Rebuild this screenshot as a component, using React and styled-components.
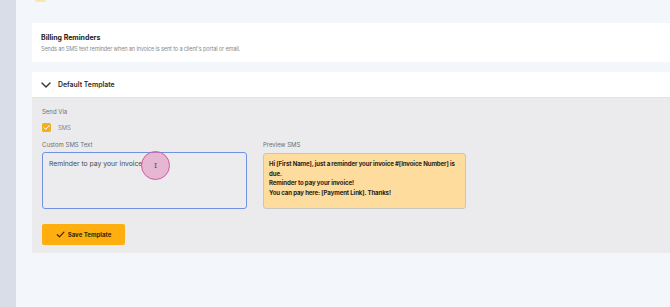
import React from "react";
import styled, { createGlobalStyle } from "styled-components";

const GlobalStyle = createGlobalStyle`
  html, body {
    margin: 0;
    padding: 0;
    background: #f3f6fa;
  }
  body {
    font-family: Inter, "Liberation Sans", sans-serif;
    color: #222;
  }
`;

function Chevron() {
  return (
    <svg width="10" height="6" viewBox="0 0 10 6" fill="none">
      <path d="M1 1l4 4 4-4" stroke="#333" strokeWidth="1.4" strokeLinecap="round" strokeLinejoin="round" />
    </svg>
  );
}

function Check({ color = "#fff", size = 7 }) {
  return (
    <svg width={size} height={size} viewBox="0 0 10 10" fill="none">
      <path d="M1.5 5.2l2.4 2.4L8.8 2.4" stroke={color} strokeWidth="1.4" strokeLinecap="round" strokeLinejoin="round" />
    </svg>
  );
}

function App() {
  return (
    <>
      <GlobalStyle />
      <Page>
        <Sidebar />
        <Main>
          <Peek />
          <Card>
            <Title>Billing Reminders</Title>
            <Subtitle>Sends an SMS text reminder when an invoice is sent to a client's portal or email.</Subtitle>
          </Card>

          <Section>
            <SectionHeader>
              <Chevron />
              <SectionTitle>Default Template</SectionTitle>
            </SectionHeader>
            <SectionBody>
              <Label>Send Via</Label>
              <CheckRow>
                <Box>
                  <Check />
                </Box>
                <CheckText>SMS</CheckText>
              </CheckRow>

              <Columns>
                <Field>
                  <Label>Custom SMS Text</Label>
                  <InputWrap>
                    <TextBox>Reminder to pay your invoice</TextBox>
                    <Pointer>
                      <Beam>I</Beam>
                    </Pointer>
                  </InputWrap>
                </Field>
                <Field>
                  <Label>Preview SMS</Label>
                  <Preview>
                    Hi [First Name], just a reminder your invoice #[Invoice Number] is due.
                    <br />
                    Reminder to pay your invoice!
                    <br />
                    You can pay here: [Payment Link]. Thanks!
                  </Preview>
                </Field>
              </Columns>

              <SaveButton>
                <Check color="#3a2a00" size={9} />
                Save Template
              </SaveButton>
            </SectionBody>
          </Section>
        </Main>
      </Page>
    </>
  );
}

export default App;

const Page = styled.div`
  display: flex;
  height: 307px;
  overflow: hidden;
`;

const Sidebar = styled.div`
  width: 16px;
  flex-shrink: 0;
  background: #d9dde7;
`;

const Main = styled.div`
  flex: 1;
  background: #f3f6fa;
  padding-left: 16px;
  display: flex;
  flex-direction: column;
`;

const Peek = styled.div`
  width: 11px;
  height: 2px;
  margin-left: 3px;
  margin-bottom: 21px;
  background: #fde6ae;
  border-radius: 0 0 6px 6px;
`;

const Card = styled.div`
  background: #fff;
  height: 39px;
  box-sizing: border-box;
  padding: 9px 9px 0;
  margin-bottom: 10px;
`;

const Title = styled.div`
  font-size: 7px;
  font-weight: 700;
  color: #1c1c1c;
  line-height: 11px;
`;

const Subtitle = styled.div`
  font-size: 5.6px;
  letter-spacing: -0.15px;
  color: #8a8a8a;
  line-height: 10px;
  margin-top: 1px;
`;

const Section = styled.div`
  display: flex;
  flex-direction: column;
`;

const SectionHeader = styled.div`
  height: 26px;
  background: #fff;
  display: flex;
  align-items: center;
  gap: 7px;
  padding-left: 9px;
  border-bottom: 1px solid #e3e3e6;
  box-sizing: border-box;
`;

const SectionTitle = styled.span`
  font-size: 6.9px;
  font-weight: 600;
  color: #2a2a2a;
`;

const SectionBody = styled.div`
  background: #ebebed;
  padding: 9px 10px 8px 10px;
  display: flex;
  flex-direction: column;
`;

const Label = styled.div`
  font-size: 6px;
  color: #6e6e6e;
  line-height: 9px;
`;

const CheckRow = styled.div`
  display: flex;
  align-items: center;
  gap: 7px;
  margin: 7px 0 8px;
`;

const Box = styled.div`
  width: 9px;
  height: 9px;
  border-radius: 1.5px;
  background: #f5ae1c;
  display: flex;
  align-items: center;
  justify-content: center;
`;

const CheckText = styled.span`
  font-size: 5.9px;
  color: #888;
`;

const Columns = styled.div`
  display: flex;
  gap: 16px;
  align-items: flex-start;
`;

const Field = styled.div`
  display: flex;
  flex-direction: column;
  gap: 3px;
`;

const InputWrap = styled.div`
  position: relative;
`;

const TextBox = styled.div`
  width: 205px;
  height: 57px;
  box-sizing: border-box;
  border: 1.5px solid #6f93e0;
  border-radius: 3px;
  background: #ececef;
  padding: 6px 6px;
  font-size: 6.8px;
  font-weight: 400;
  color: #4a4a4a;
`;

const Pointer = styled.div`
  position: absolute;
  left: 99px;
  top: -1px;
  width: 29px;
  height: 29px;
  box-sizing: border-box;
  border-radius: 50%;
  border: 1.5px solid #d85a9d;
  background: rgba(224, 120, 176, 0.45);
  display: flex;
  align-items: center;
  justify-content: center;
`;

const Beam = styled.span`
  font-family: "DejaVu Serif", serif;
  font-size: 8px;
  color: #555;
`;

const Preview = styled.div`
  width: 203px;
  height: 56px;
  box-sizing: border-box;
  margin-top: 1px;
  background: #fddc9e;
  border: 1.5px solid #c9c6c2;
  border-radius: 3px;
  padding: 5px 4px 5px 5px;
  font-size: 6.1px;
  letter-spacing: -0.12px;
  line-height: 9.5px;
  font-weight: 700;
  color: #2a2418;
`;

const SaveButton = styled.button`
  margin-top: 15px;
  align-self: flex-start;
  width: 83px;
  height: 21px;
  border: none;
  border-radius: 2px;
  background: #ffae10;
  display: flex;
  align-items: center;
  justify-content: center;
  gap: 3px;
  font-family: Inter, "Liberation Sans", sans-serif;
  font-size: 6.1px;
  font-weight: 700;
  color: #3a2a00;
  padding: 0;
`;
